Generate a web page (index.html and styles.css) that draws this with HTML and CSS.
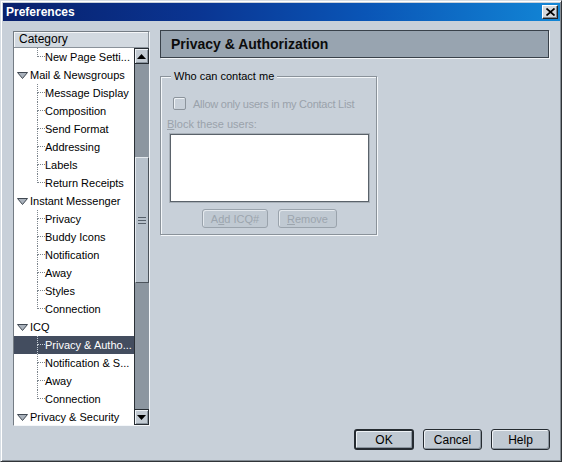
FILE: index.html
```html
<!DOCTYPE html>
<html>
<head>
<meta charset="utf-8">
<title>Preferences</title>
<link rel="stylesheet" href="styles.css">
</head>
<body>
<div class="window">
  <div class="titlebar">
    <span class="title">Preferences</span>
    <span class="close"><svg width="9" height="8" viewBox="0 0 9 8"><path d="M0.5 0.5 L8.5 7.5 M8.5 0.5 L0.5 7.5" stroke="#000" stroke-width="1.7" fill="none"/></svg></span>
  </div>
  <div class="main">
    <div class="cat-panel">
      <div class="cat-header">Category</div>
      <div class="cat-body">
        <ul class="tree">
          <li class="row child last"><span class="conn"><span class="c-top"></span><span class="c-bot"></span></span>New Page Setti...</li>
          <li class="row parent"><svg class="tri" width="11" height="7" viewBox="0 0 11 7"><polygon points="0.5,0.5 10.5,0.5 5.5,6.5" fill="#aab2bc" stroke="#404852"/></svg>Mail &amp; Newsgroups</li>
          <li class="row child"><span class="conn"><span class="c-top"></span><span class="c-bot"></span></span>Message Display</li>
          <li class="row child"><span class="conn"><span class="c-top"></span><span class="c-bot"></span></span>Composition</li>
          <li class="row child"><span class="conn"><span class="c-top"></span><span class="c-bot"></span></span>Send Format</li>
          <li class="row child"><span class="conn"><span class="c-top"></span><span class="c-bot"></span></span>Addressing</li>
          <li class="row child"><span class="conn"><span class="c-top"></span><span class="c-bot"></span></span>Labels</li>
          <li class="row child last"><span class="conn"><span class="c-top"></span><span class="c-bot"></span></span>Return Receipts</li>
          <li class="row parent"><svg class="tri" width="11" height="7" viewBox="0 0 11 7"><polygon points="0.5,0.5 10.5,0.5 5.5,6.5" fill="#aab2bc" stroke="#404852"/></svg>Instant Messenger</li>
          <li class="row child"><span class="conn"><span class="c-top"></span><span class="c-bot"></span></span>Privacy</li>
          <li class="row child"><span class="conn"><span class="c-top"></span><span class="c-bot"></span></span>Buddy Icons</li>
          <li class="row child"><span class="conn"><span class="c-top"></span><span class="c-bot"></span></span>Notification</li>
          <li class="row child"><span class="conn"><span class="c-top"></span><span class="c-bot"></span></span>Away</li>
          <li class="row child"><span class="conn"><span class="c-top"></span><span class="c-bot"></span></span>Styles</li>
          <li class="row child last"><span class="conn"><span class="c-top"></span><span class="c-bot"></span></span>Connection</li>
          <li class="row parent"><svg class="tri" width="11" height="7" viewBox="0 0 11 7"><polygon points="0.5,0.5 10.5,0.5 5.5,6.5" fill="#aab2bc" stroke="#404852"/></svg>ICQ</li>
          <li class="row child selected"><span class="conn"><span class="c-top"></span><span class="c-bot"></span></span>Privacy &amp; Autho...</li>
          <li class="row child"><span class="conn"><span class="c-top"></span><span class="c-bot"></span></span>Notification &amp; S...</li>
          <li class="row child"><span class="conn"><span class="c-top"></span><span class="c-bot"></span></span>Away</li>
          <li class="row child last"><span class="conn"><span class="c-top"></span><span class="c-bot"></span></span>Connection</li>
          <li class="row parent"><svg class="tri" width="11" height="7" viewBox="0 0 11 7"><polygon points="0.5,0.5 10.5,0.5 5.5,6.5" fill="#aab2bc" stroke="#404852"/></svg>Privacy &amp; Security</li>
        </ul>
        <div class="scrollbar">
          <div class="sb-btn"><svg width="9" height="5" viewBox="0 0 9 5"><polygon points="4.5,0 9,5 0,5" fill="#000"/></svg></div>
          <div class="sb-track">
            <div class="sb-thumb"><span class="grip"></span><span class="grip"></span><span class="grip"></span></div>
          </div>
          <div class="sb-btn"><svg width="9" height="5" viewBox="0 0 9 5"><polygon points="0,0 9,0 4.5,5" fill="#000"/></svg></div>
        </div>
      </div>
    </div>
    <div class="content">
      <div class="page-header">Privacy &amp; Authorization</div>
      <fieldset class="group">
        <legend class="group-title">Who can contact me</legend>
        <div class="check-row"><span class="checkbox"></span><span class="disabled check-label">Allow only users in my Contact List</span></div>
        <div class="field-label disabled"><u>B</u>lock these users:</div>
        <div class="listbox"></div>
        <div class="list-buttons">
          <span class="btn small add">A<u>d</u>d ICQ#</span>
          <span class="btn small remove"><u>R</u>emove</span>
        </div>
      </fieldset>
      <div class="dialog-buttons">
        <span class="btn dlg default">OK</span>
        <span class="btn dlg">Cancel</span>
        <span class="btn dlg">Help</span>
      </div>
    </div>
  </div>
</div>
</body>
</html>
```
FILE: styles.css
```css
* { box-sizing: border-box; }
html, body { margin: 0; padding: 0; }
body {
  width: 562px;
  height: 462px;
  font-family: "Liberation Sans", Arial, sans-serif;
  font-size: 11px;
  color: #000;
  background: #c8d0d9;
  overflow: hidden;
}
.window {
  width: 562px;
  height: 462px;
  background: #c8d0d9;
  border: 1px solid;
  border-color: #d6dde4 #303438 #303438 #d6dde4;
  padding: 2px 1px 1px 2px;
  box-shadow: inset 1px 1px 0 #ffffff, inset -1px -1px 0 #848c94;
  display: flex;
  flex-direction: column;
}
.titlebar {
  height: 18px;
  flex: none;
  display: flex;
  align-items: center;
  justify-content: space-between;
  padding: 0 2px 0 3px;
  background: linear-gradient(90deg, #08206c 0%, #0a3592 35%, #0a55b6 65%, #1286d6 100%);
}
.title {
  color: #fff;
  font-weight: bold;
  font-size: 12px;
}
.close {
  width: 16px;
  height: 14px;
  display: flex;
  align-items: center;
  justify-content: center;
  background: #d4d8dc;
  border: 1px solid;
  border-color: #ffffff #202428 #202428 #ffffff;
  box-shadow: inset -1px -1px 0 #808890;
}
.main {
  flex: 1;
  display: flex;
  gap: 10px;
  padding: 9px 10px 10px 10px;
}
.cat-panel {
  width: 137px;
  height: 395px;
  margin-top: 1px;
  flex: none;
  display: flex;
  flex-direction: column;
  border: 1px solid;
  border-color: #747c84 #f4f7fa #f4f7fa #747c84;
  background: #fff;
}
.cat-header {
  height: 16px;
  flex: none;
  line-height: 15px;
  padding-left: 5px;
  font-size: 12px;
  background: #d2d9e0;
  border-right: 1px solid #8a929a;
  border-bottom: 1px solid #8a929a;
  box-shadow: inset 1px 1px 0 #f4f6f8;
}
.cat-body {
  flex: 1;
  display: flex;
  min-height: 0;
}
.tree {
  list-style: none;
  margin: 0;
  padding: 0;
  flex: 1;
  overflow: hidden;
  background: #fff;
}
.row {
  height: 18px;
  display: flex;
  align-items: center;
  white-space: nowrap;
  font-size: 11px;
}
.parent { padding-left: 3px; }
.tri { margin-right: 2px; flex: none; }
.child { padding-left: 23px; }
.conn {
  width: 8px;
  height: 18px;
  flex: none;
  display: flex;
  flex-direction: column;
}
.c-top {
  height: 9px;
  border-left: 1px dotted #7c848c;
  border-bottom: 1px dotted #7c848c;
}
.c-bot {
  flex: 1;
  border-left: 1px dotted #7c848c;
}
.last .c-bot { border-left: none; }
.selected {
  background: #434d5f;
  color: #fff;
}
.selected .c-top, .selected .c-bot { border-color: #c8d0d8; }
.scrollbar {
  width: 15px;
  flex: none;
  display: flex;
  flex-direction: column;
  background: #8c96a0;
}
.sb-btn {
  height: 16px;
  flex: none;
  display: flex;
  align-items: center;
  justify-content: center;
  background: #c2cad2;
  border: 1px solid #262c32;
  box-shadow: inset 1px 1px 0 #eef2f6, inset -1px -1px 0 #8a949e;
}
.sb-track {
  flex: 1;
  border-left: 1px solid #2a3036;
}
.sb-thumb {
  margin-top: 93px;
  height: 126px;
  background: #b8c2cc;
  border: 1px solid;
  border-color: #e4e9ee #4c545c #4c545c #e4e9ee;
  display: flex;
  flex-direction: column;
  align-items: center;
  justify-content: center;
  gap: 2px;
}
.grip {
  width: 8px;
  height: 1px;
  background: #56606a;
}
.content {
  flex: 1;
  display: flex;
  flex-direction: column;
}
.page-header {
  width: 389px;
  height: 28px;
  flex: none;
  background: #98a4b0;
  border: 1px solid #39414a;
  box-shadow: 1px 1px 0 #f2f5f8;
  padding-left: 10px;
  line-height: 26px;
  font-size: 14px;
  font-weight: bold;
  color: #0c0c0c;
}
.group {
  width: 217px;
  margin: 12px 0 0 0;
  padding: 0 7px 6px 6px;
  border: 1px solid #8a929a;
  box-shadow: inset 1px 1px 0 #f4f7fa, 1px 1px 0 #f4f7fa;
}
.group-title {
  margin-left: 4px;
  padding: 0 3px;
  line-height: 13px;
  font-size: 11px;
  background: #c8d0d9;
}
.check-row {
  margin-top: 14px;
  height: 13px;
  display: flex;
  align-items: center;
  gap: 7px;
  padding-left: 6px;
  white-space: nowrap;
}
.check-label { letter-spacing: -0.25px; }
.checkbox {
  width: 13px;
  height: 13px;
  flex: none;
  border: 1px solid #8c949c;
  border-radius: 2px;
  background: #c8d0d9;
  box-shadow: inset 1px 1px 0 #eef2f6;
}
.disabled { color: #9aa2ab; }
.field-label {
  margin-top: 8px;
  line-height: 13px;
}
.listbox {
  margin: 3px 0 0 3px;
  width: 199px;
  height: 68px;
  background: #fff;
  border: 1px solid #5a626a;
  box-shadow: 0 0 0 1px #a8b0b8;
}
.list-buttons {
  margin-left: 3px;
  width: 199px;
  margin-top: 7px;
  display: flex;
  justify-content: center;
  gap: 10px;
}
.btn {
  display: flex;
  align-items: center;
  justify-content: center;
  border-radius: 3px;
  background: #c0c9d2;
}
.small {
  height: 19px;
  border: 1px solid #9aa3ac;
  color: #9ca5ae;
  box-shadow: inset 1px 1px 0 #e4e9ee;
  font-size: 11px;
}
.add { width: 66px; }
.remove { width: 59px; }
.dialog-buttons {
  margin-top: auto;
  display: flex;
  justify-content: flex-end;
  gap: 9px;
}
.dlg {
  width: 59px;
  height: 21px;
  border: 1px solid #252b31;
  box-shadow: inset 1px 1px 0 #eef2f6, inset -1px -1px 0 #8a949e;
  font-size: 12px;
}
.dlg.default {
  width: 60px;
  border-width: 2px;
}
```
